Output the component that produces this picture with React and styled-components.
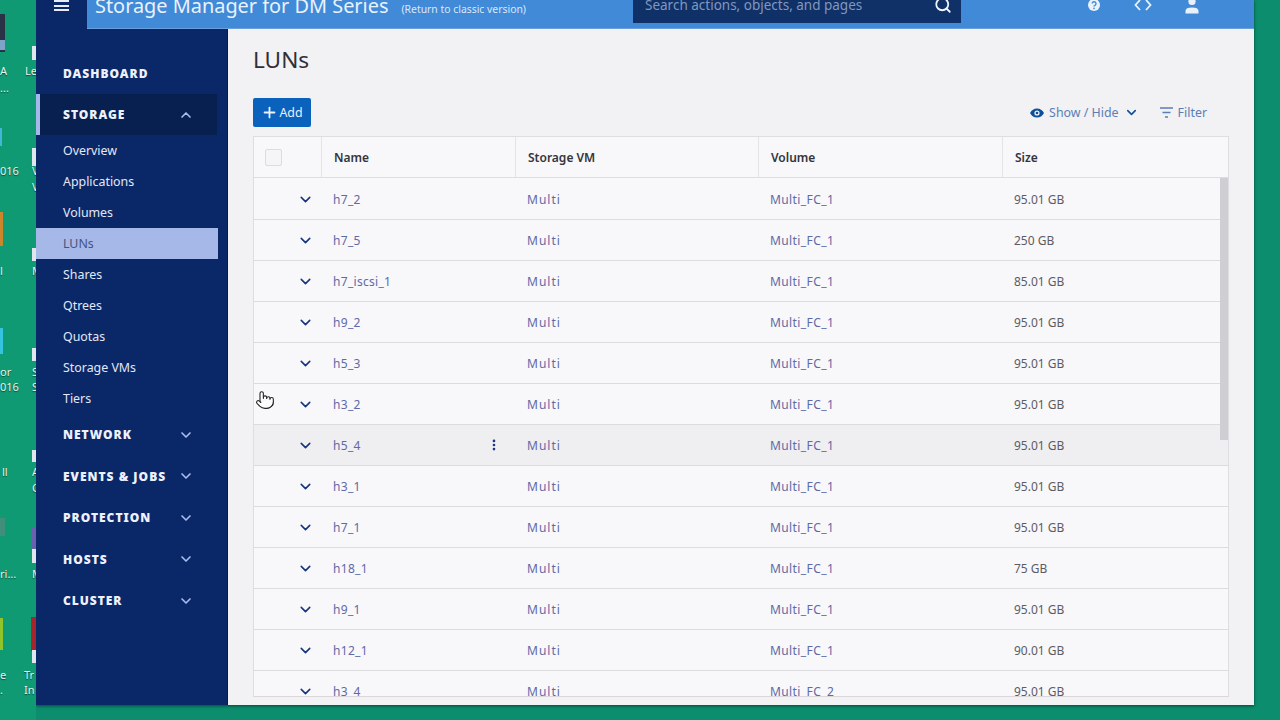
import React from 'react';
import styled, { createGlobalStyle } from 'styled-components';
import { ChevronDown, ChevronUp, Plus, Search, MoreVertical, Pointer } from 'lucide-react';

const Global = createGlobalStyle`
  html, body { margin: 0; padding: 0; height: 720px; overflow: hidden; background: #0c8e6e; }
  * { box-sizing: border-box; }
  body { font-family: "Noto Sans", "Open Sans", sans-serif; }
`;
const Desktop = styled.div`width:1280px;height:720px;display:flex;background:#0c8e6e;overflow:hidden;position:relative;`;
const Strip = styled.div`width:36px;height:720px;flex:none;position:relative;overflow:hidden;background:#109a73;`;
const Label = styled.span`position:absolute;left:${p => p.$x}px;top:${p => p.$y}px;color:#e8f2ee;font-size:11px;line-height:14px;white-space:nowrap;text-shadow:0 1px 1px rgba(0,0,0,.5);`;
const Bit = styled.div`position:absolute;left:${p => p.$x}px;top:${p => p.$y}px;width:${p => p.$w}px;height:${p => p.$h}px;background:${p => p.$c};border-radius:${p => p.$r || 0}px;`;
const Window = styled.div`width:1218px;height:705px;flex:none;display:flex;flex-direction:column;background:#f2f1f4;box-shadow:0 1px 3px rgba(0,40,30,.7);`;
const TopBar = styled.div`height:29px;flex:none;display:flex;background:#0a2768;`;
const MenuArea = styled.div`width:51px;flex:none;display:flex;justify-content:center;padding-left:0;`;
const Burger = styled.div`width:15px;height:11px;position:relative;border-top:2px solid #e8ecfa;border-bottom:2px solid #e8ecfa;&::after{content:'';position:absolute;left:0;right:0;top:2.5px;height:2px;background:#e8ecfa;}`;
const Header = styled.div`flex:1;display:flex;align-items:flex-end;background:#418ad8;color:#e9f2fb;border-bottom:1px solid #6b9fdc;`;
const Brand = styled.div`width:546px;padding-left:8px;height:28px;display:flex;align-items:flex-start;overflow:hidden;`;
const BrandName = styled.span`font-size:19.9px;line-height:20px;margin-top:-4px;white-space:nowrap;`;
const Classic = styled.span`font-size:10.4px;line-height:14px;margin:2px 0 0 13px;white-space:nowrap;color:#dbe8f8;`;
const SearchBox = styled.div`width:328px;height:23px;align-self:flex-start;background:#103068;display:flex;align-items:flex-start;justify-content:space-between;padding:0 9px 0 12px;color:#8098bd;font-size:13.5px;line-height:11px;overflow:hidden;svg{margin-top:-4px;flex:none;}`;
const HeaderIcons = styled.div`flex:1;display:flex;padding-left:124px;gap:31px;height:28px;align-items:flex-start;`;
const HeaderIcon = styled.svg`width:18px;height:18px;flex:none;margin-top:-4px;`;
const Body = styled.div`flex:1;display:flex;min-height:0;`;
const Sidebar = styled.nav`width:192px;flex:none;background:#0a2768;padding:24px 9px 0 0;display:flex;flex-direction:column;border-right:1px solid #061a4a;`;
const Section = styled.div`height:${p => p.$h || 41.5}px;display:flex;align-items:center;justify-content:space-between;padding:0 24px 0 27px;color:#eef1fb;font-weight:900;font-size:12px;letter-spacing:1px;white-space:nowrap;flex:none;
  ${p => p.$open ? 'background:#07204f;box-shadow:inset 4px 0 0 #a6b8ea;margin-right:1px;padding-right:23px;' : ''}
  svg{color:#a9bcf0;}`;
const Sub = styled.div`height:31px;display:flex;align-items:center;padding-left:27px;font-size:12.4px;flex:none;color:${p => p.$active ? '#44547f' : '#e3e8f6'};background:${p => p.$active ? '#a6b8e8' : 'transparent'};`;
const Main = styled.main`flex:1;min-width:0;padding:0 25px 8px 25px;display:flex;flex-direction:column;`;
const Title = styled.h1`margin:16px 0 0;font-weight:400;font-size:22.6px;line-height:29px;color:#2f3036;`;
const Toolbar = styled.div`display:flex;align-items:center;justify-content:space-between;height:29px;margin:24px 0 9px;`;
const AddButton = styled.div`width:58px;height:29px;background:#0a62bd;color:#eaf1fb;border-radius:2px;display:flex;align-items:center;justify-content:center;gap:1px;font-size:12.4px;`;
const Tools = styled.div`display:flex;align-items:center;color:#5a7fb4;font-size:12.4px;padding-right:22px;`;
const Tool = styled.div`display:flex;align-items:center;gap:5px;margin-left:${p => p.$gap || 0}px;svg{color:#0d4f99;flex:none;}`;
const Table = styled.div`flex:1;min-height:0;border:1px solid #dedde2;background:#f8f7fa;display:flex;flex-direction:column;position:relative;overflow:hidden;border-bottom-color:#dcd6da;`;
const Grid = styled.div`display:grid;grid-template-columns:67px 194px 243px 244px 1fr;flex:none;`;
const Head = styled(Grid)`height:41px;border-bottom:1px solid #dedde2;font-size:12px;font-weight:600;color:#34353b;`;
const HeadCell = styled.div`display:flex;align-items:center;padding-left:12px;border-left:${p => p.$first ? '0' : '1px solid #e4e3e8'};`;
const Check = styled.div`width:17px;height:17px;margin-left:-1px;border:1px solid #dcdbe0;border-radius:2px;background:#f5f4f7;`;
const Rows = styled.div`flex:1;min-height:0;overflow:hidden;padding-top:1px;`;
const Row = styled(Grid)`height:41px;border-bottom:1px solid #dcdbe0;font-size:12px;color:#5e6aa6;background:${p => p.$hover ? '#efeef1' : 'transparent'};`;
const Cell = styled.div`display:flex;align-items:center;padding-left:12px;justify-content:space-between;padding-right:${p => p.$pr || 0}px;white-space:nowrap;letter-spacing:${p => p.$sp || 0}px;color:${p => p.$size ? '#5c5c62' : 'inherit'};`;
const Expander = styled.div`display:flex;align-items:center;padding-left:43px;color:#15367e;`;
const Scroll = styled.div`position:absolute;right:0;top:41px;width:8px;height:262px;background:#cfced3;`;
const Cursor = styled.div`position:absolute;left:255px;top:390px;width:20px;height:20px;svg{display:block;}`;

const nav = ['Overview','Applications','Volumes','LUNs','Shares','Qtrees','Quotas','Storage VMs','Tiers'];
const rows = [
 ['h7_2','Multi_FC_1','95.01 GB'],['h7_5','Multi_FC_1','250 GB'],['h7_iscsi_1','Multi_FC_1','85.01 GB'],
 ['h9_2','Multi_FC_1','95.01 GB'],['h5_3','Multi_FC_1','95.01 GB'],['h3_2','Multi_FC_1','95.01 GB'],
 ['h5_4','Multi_FC_1','95.01 GB'],['h3_1','Multi_FC_1','95.01 GB'],['h7_1','Multi_FC_1','95.01 GB'],
 ['h18_1','Multi_FC_1','75 GB'],['h9_1','Multi_FC_1','95.01 GB'],['h12_1','Multi_FC_1','90.01 GB'],
 ['h3_4','Multi_FC_2','95.01 GB'],
];
const labels = [
 [0,64,'A'],[0,81,'...'],[25,64,'Le'],[0,164,'016'],[32,164,'V'],[32,180,'V'],[0,264,'l'],[32,264,'M'],
 [0,365,'or'],[32,365,'S'],[0,380,'016'],[32,380,'S'],[2,465,'ll'],[32,465,'A'],[32,481,'C'],
 [0,567,'ri...'],[32,567,'M'],[0,668,'e'],[0,683,'.'],[24,668,'Tr'],[24,683,'In'],
];
const bits = [
 [0,14,5,38,'#2a3346'],[0,40,5,10,'#7fa3c8'],[32,46,4,14,'#dfe6ee'],[0,128,2,18,'#43b5d8'],[32,148,4,18,'#dfe6ee'],
 [0,212,3,34,'#c9862a'],[32,248,4,13,'#dfe6ee'],[0,328,3,26,'#35c3e0'],[32,348,4,13,'#dfe6ee'],[32,450,4,12,'#dfe6ee'],
 [0,518,5,18,'#3f8f7a'],[32,528,4,22,'#6a60b0'],[32,549,4,14,'#dfe6ee'],[0,618,3,32,'#8fc52a'],[31,617,5,34,'#a4262c'],[32,650,4,13,'#dfe6ee'],
];

export default function App(){
  return <Desktop><Global/>
    <Strip>
      {bits.map((b,i) => <Bit key={i} $x={b[0]} $y={b[1]} $w={b[2]} $h={b[3]} $c={b[4]}/>)}
      {labels.map((l,i) => <Label key={i} $x={l[0]} $y={l[1]}>{l[2]}</Label>)}
    </Strip>
    <Window>
      <TopBar>
        <MenuArea><Burger/></MenuArea>
        <Header>
          <Brand><BrandName>Storage Manager for DM Series</BrandName><Classic>(Return to classic version)</Classic></Brand>
          <SearchBox><span>Search actions, objects, and pages</span><Search size={18} color="#eef4fb" strokeWidth={2.4}/></SearchBox>
          <HeaderIcons>
            <HeaderIcon viewBox="0 0 18 18"><circle cx="9" cy="9" r="6" fill="#e9f2fb"/><path d="M7.2 7.6a1.9 1.9 0 1 1 2.8 1.7c-.6.3-1 .7-1 1.3" fill="none" stroke="#418ad8" strokeWidth="1.4"/><circle cx="9" cy="12.4" r=".8" fill="#418ad8"/></HeaderIcon>
            <HeaderIcon viewBox="0 0 18 18"><path d="M6 4 1.5 9 6 14M12 4l4.5 5L12 14" fill="none" stroke="#e9f2fb" strokeWidth="1.8"/></HeaderIcon>
            <HeaderIcon viewBox="0 0 18 18"><circle cx="9" cy="5.5" r="3.6" fill="#e9f2fb"/><path d="M2.5 17.5v-2.6c0-2.2 2.2-3.4 6.5-3.4s6.5 1.2 6.5 3.4v2.6z" fill="#e9f2fb"/></HeaderIcon>
          </HeaderIcons>
        </Header>
      </TopBar>
      <Body>
        <Sidebar>
          <Section $h={41}>DASHBOARD</Section>
          <Section $open $h={41}>STORAGE<ChevronUp size={16} strokeWidth={2.5}/></Section>
          {nav.map(n => <Sub key={n} $active={n==='LUNs'}>{n}</Sub>)}
          {['NETWORK','EVENTS & JOBS','PROTECTION','HOSTS','CLUSTER'].map(s => <Section key={s}>{s}<ChevronDown size={16} strokeWidth={2.5}/></Section>)}
        </Sidebar>
        <Main>
          <Title>LUNs</Title>
          <Toolbar>
            <AddButton><Plus size={17} strokeWidth={2.5}/>Add</AddButton>
            <Tools>
              <Tool>
                <svg width="14" height="14" viewBox="0 0 14 14"><path d="M0 7c1.6-3 4-4.6 7-4.6S12.400 4 14 7c-1.600 3-4 4.600-7 4.600S1.600 10 0 7z" fill="currentColor"/><circle cx="7" cy="7" r="2.600" fill="#f2f1f4"/><circle cx="7" cy="7" r="1.300" fill="currentColor"/></svg>
                Show / Hide
                <ChevronDown size={15} strokeWidth={2.5}/>
              </Tool>
              <Tool $gap={21}>
                <svg width="13" height="11" viewBox="0 0 13 11"><path d="M0 1h13M2.500 5.500h8M5 10h3" stroke="#5a7fb4" strokeWidth="1.500"/></svg>
                Filter
              </Tool>
            </Tools>
          </Toolbar>
          <Table>
            <Head><HeadCell $first><Check/></HeadCell><HeadCell>Name</HeadCell><HeadCell>Storage VM</HeadCell><HeadCell>Volume</HeadCell><HeadCell>Size</HeadCell></Head>
            <Rows>{rows.map((r,i) => <Row key={r[0]} $hover={i===6}>
              <Expander><ChevronDown size={17} strokeWidth={2.2}/></Expander>
              <Cell $pr={14} $sp={.3}>{r[0]}{i===6 && <MoreVertical size={14} strokeWidth={2.6} color="#15367e"/>}</Cell>
              <Cell $sp={1}>Multi</Cell><Cell $sp={.4}>{r[1]}</Cell><Cell $size>{r[2]}</Cell>
            </Row>)}</Rows>
            <Scroll/>
          </Table>
        </Main>
      </Body>
    </Window>
    <Cursor><Pointer size={20} color="#222" fill="#fff" strokeWidth={1.300}/></Cursor>
  </Desktop>;
}
